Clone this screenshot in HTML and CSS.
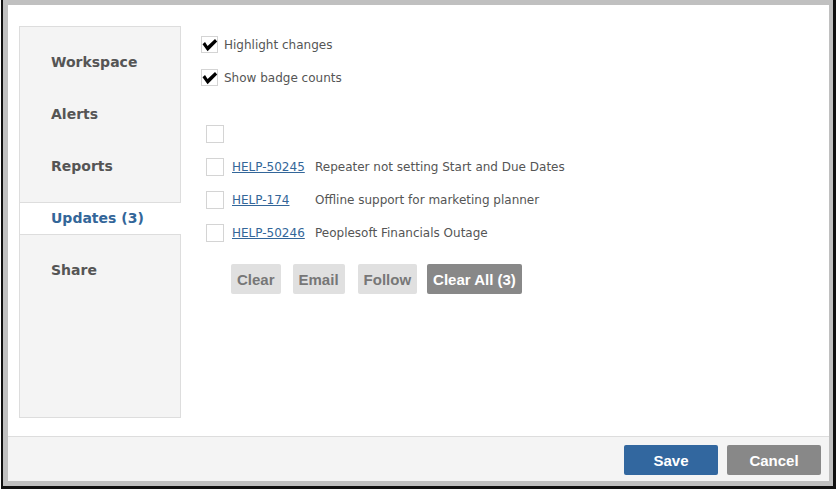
FILE: index.html
```html
<!DOCTYPE html>
<html>
<head>
<meta charset="utf-8">
<link rel="stylesheet" href="styles.css">
</head>
<body>
<div class="frame">
  <div class="dialog">
    <div class="main">
      <nav class="nav">
        <div class="nav-item">Workspace</div>
        <div class="nav-item">Alerts</div>
        <div class="nav-item">Reports</div>
        <div class="nav-item active">Updates (3)</div>
        <div class="nav-item">Share</div>
      </nav>
      <section class="content">
        <label class="opt">
          <span class="box checked"><svg viewBox="0 0 17 17" width="17" height="17"><path d="M1.5 8.2 L4 6 L6.6 10 L14 3 L16.2 5.4 L6.6 15.2 Z" fill="#000"/></svg></span>
          <span class="opt-text">Highlight changes</span>
        </label>
        <label class="opt">
          <span class="box checked"><svg viewBox="0 0 17 17" width="17" height="17"><path d="M1.5 8.2 L4 6 L6.6 10 L14 3 L16.2 5.4 L6.6 15.2 Z" fill="#000"/></svg></span>
          <span class="opt-text">Show badge counts</span>
        </label>
        <div class="list">
          <span class="box lbox"></span><span></span><span></span>
          <span class="box lbox"></span><a class="key" href="#">HELP-50245</a><span class="title">Repeater not setting Start and Due Dates</span>
          <span class="box lbox"></span><a class="key" href="#">HELP-174</a><span class="title">Offline support for marketing planner</span>
          <span class="box lbox"></span><a class="key" href="#">HELP-50246</a><span class="title">Peoplesoft Financials Outage</span>
        </div>
        <div class="actions">
          <button class="btn light">Clear</button>
          <button class="btn light">Email</button>
          <button class="btn light follow">Follow</button>
          <button class="btn dark">Clear All (3)</button>
        </div>
      </section>
    </div>
    <footer class="footer">
      <button class="fbtn save">Save</button>
      <button class="fbtn cancel">Cancel</button>
    </footer>
  </div>
</div>
</body>
</html>
```
FILE: styles.css
```css
html, body {
  margin: 0;
  padding: 0;
  background: #fff;
}
.frame {
  margin-left: 1px;
  width: 835px;
  height: 489px;
  box-sizing: border-box;
  border-left: 2px solid #111;
  border-right: 3px solid #111;
  border-bottom: 3px solid #111;
}
.dialog {
  height: 100%;
  box-sizing: border-box;
  border: 5px solid #c0c0c0;
  border-right-width: 4px;
  display: flex;
  flex-direction: column;
  background: #fff;
}
.main {
  flex: 1;
  display: flex;
  padding: 21px 0 18px 11px;
}
.nav {
  width: 160px;
  background: #f4f4f4;
  border: 1px solid #ddd;
  padding-top: 19px;
  font-family: "DejaVu Sans", Verdana, sans-serif;
  font-weight: bold;
  font-size: 14px;
  color: #555;
}
.nav-item {
  height: 31px;
  line-height: 31px;
  padding-left: 31px;
  margin-bottom: 19px;
  border-top: 1px solid transparent;
  border-bottom: 1px solid transparent;
}
.nav-item.active {
  background: #fff;
  color: #336699;
  border-color: #ddd;
  margin-right: -1px;
  position: relative;
}
.content {
  flex: 1;
  padding: 10px 0 0 20px;
  font-family: "DejaVu Sans", Verdana, sans-serif;
  font-size: 12px;
  color: #555;
}
.opt {
  display: flex;
  align-items: center;
  gap: 6px;
  height: 17px;
  margin-bottom: 16px;
}
.box {
  display: inline-block;
  box-sizing: border-box;
  width: 17px;
  height: 17px;
  border: 1px solid #d4d4d4;
  background: #fff;
  position: relative;
}
.box svg {
  position: absolute;
  left: -1px;
  top: -1px;
}
.list {
  display: grid;
  grid-template-columns: 18px 75px 1fr;
  column-gap: 8px;
  row-gap: 15px;
  align-items: center;
  margin: 39px 0 0 5px;
}
.lbox {
  width: 18px;
  height: 18px;
}
.key {
  color: #336699;
  text-decoration: underline;
}
.actions {
  display: flex;
  gap: 12px;
  margin: 22px 0 0 30px;
}
.btn {
  height: 30px;
  border: none;
  border-radius: 2px;
  padding: 0 6px;
  font-family: "Liberation Sans", Arial, sans-serif;
  font-weight: bold;
  font-size: 15px;
}
.btn.follow {
  margin-left: 1px;
}
.btn.light {
  background: #e0e0e0;
  color: #777;
}
.btn.dark {
  background: #888;
  color: #fff;
  margin-left: -2px;
}
.footer {
  height: 45px;
  flex: none;
  border-top: 1px solid #ddd;
  background: #f4f4f4;
  display: flex;
  justify-content: flex-end;
  align-items: flex-start;
  gap: 9px;
  padding: 8px 8px 0 0;
  box-sizing: border-box;
}
.fbtn {
  width: 94px;
  height: 30px;
  border: none;
  border-radius: 2px;
  color: #fff;
  font-family: "Liberation Sans", Arial, sans-serif;
  font-weight: bold;
  font-size: 15px;
}
.save {
  background: #32679f;
}
.cancel {
  background: #888;
}
```
